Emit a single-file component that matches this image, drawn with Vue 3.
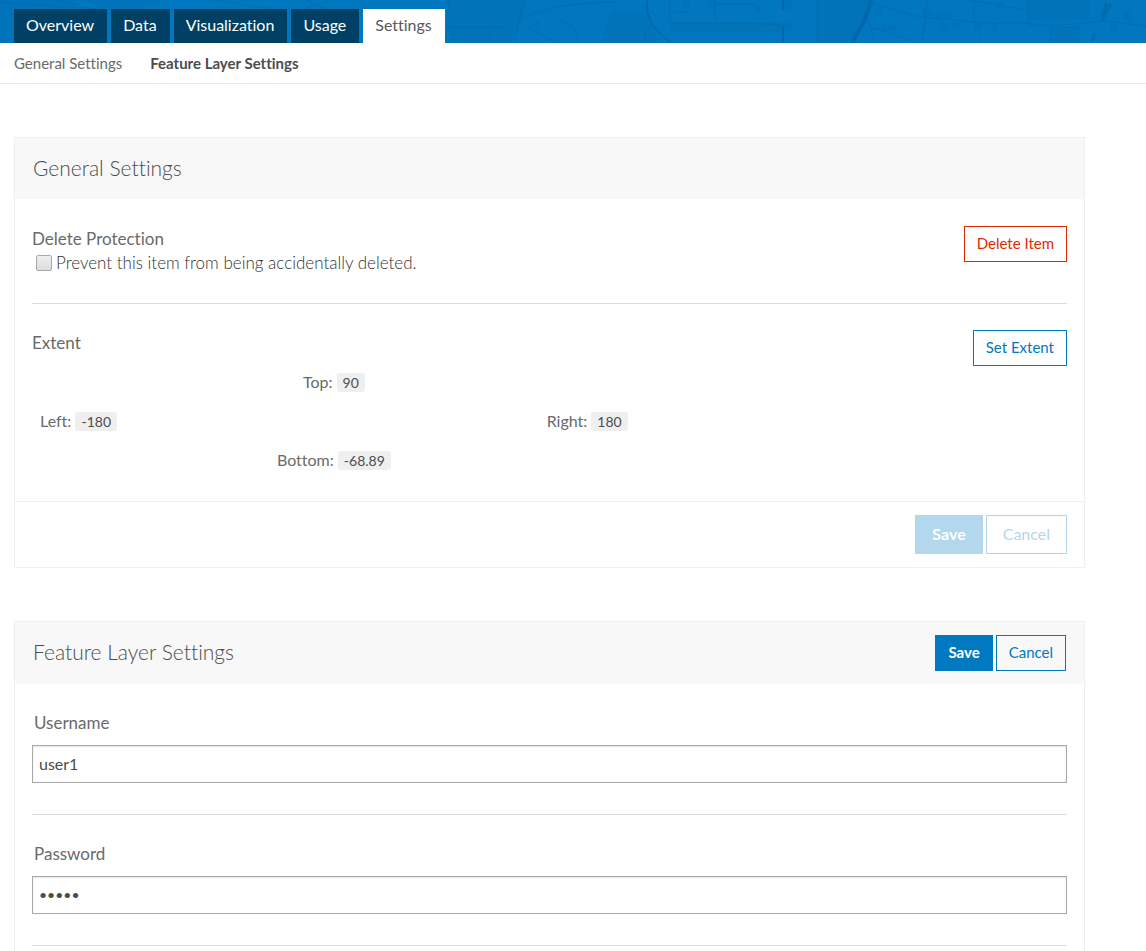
<script setup>
import { ref } from 'vue'

const tabs = ['Overview', 'Data', 'Visualization', 'Usage', 'Settings']
const activeTab = 'Settings'
const extent = [
  { side: 'top', label: 'Top:', value: '90' },
  { side: 'left', label: 'Left:', value: '-180' },
  { side: 'right', label: 'Right:', value: '180' },
  { side: 'bottom', label: 'Bottom:', value: '-68.89' },
]
const protect = ref(false)
const username = ref('user1')
const password = ref('abcde')
</script>

<template>
  <div class="page">
    <header class="banner">
      <svg class="map" viewBox="0 0 1146 43" preserveAspectRatio="xMinYMin slice" aria-hidden="true">
        <g fill="#006fb3" opacity=".4">
          <path d="M0 0H80L40 43H0zM85 0h75l-20 9H100zM448 0h80l-6 20-12 23h-60zM600 43l12-32 36 4 10 28zM670 22h120v10H670zM817 0h53l-4 20-16 23h-33zM1028 0h62v20h-62zM1050 27h30v16h-30z" />
          <circle cx="492" cy="26" r="4" /><circle cx="537" cy="24" r="3" /><circle cx="686" cy="3" r="4" />
          <circle cx="712" cy="3" r="5" /><circle cx="758" cy="9" r="3" /><circle cx="787" cy="4" r="6" />
          <circle cx="787" cy="28" r="5" /><circle cx="879" cy="11" r="3" /><circle cx="885" cy="28" r="4" />
          <circle cx="893" cy="29" r="4" /><circle cx="927" cy="14" r="5" /><circle cx="939" cy="16" r="4" />
          <circle cx="949" cy="15" r="4" /><circle cx="944" cy="27" r="5" /><circle cx="957" cy="26" r="4" />
          <circle cx="978" cy="26" r="4" /><circle cx="995" cy="27" r="4" /><circle cx="1000" cy="6" r="4" />
          <circle cx="1114" cy="28" r="4" /><circle cx="1127" cy="16" r="4" />
        </g>
        <g fill="none" stroke="#0067a8" stroke-width="1" opacity=".55">
          <path d="M0 2l110 8M60 0l50 14M210 0l60 8M305 0l22 9M330 0l-26 9M448 0v30l-6 13M448 27h62M490 28v15M523 0l-8 43M526 16c25-8 38-13 92-14M525 26l32 17M560 20c12 3 18 10 17 23M640 5c12 5 15 10 21 15M670 0v20M675 12h15M715 0v20M715 4h40M670 23h60l60 2M645 43c0-11 1-16 8-18M817 43V0M870 3l50 14 65 6h50M870 27l42 14M868 20l7 23M922 43l3-25 2-18M970 0l55 10M974 0v22M980 43v-9M1028 0v25h35l42-4 41 5M1050 43V27h30" />
        </g>
        <g fill="none" stroke="#0065a5" opacity=".75">
          <path d="M647 0v10c3 15 10 22 24 33" stroke-width="2" />
          <path d="M783 0v10M783 26v17" stroke-width="2" />
          <path d="M871 0c-3 14-6 20-10 27l-9 16" stroke-width="4" />
          <path d="M1107 3l-5 12M1111 4l-10 17M1095 33l-3 8" stroke-width="3" />
        </g>
      </svg>
      <nav class="tabs" aria-label="Item">
        <a v-for="t in tabs" :key="t" href="#" class="tab" :class="{ active: t === activeTab }">{{ t }}</a>
      </nav>
    </header>

    <nav class="subnav" aria-label="Settings">
      <a href="#">General Settings</a>
      <a href="#" class="current">Feature Layer Settings</a>
    </nav>

    <main class="content">
      <section class="panel">
        <div class="panel-head"><h2>General Settings</h2></div>
        <div class="block">
          <div class="row">
            <div>
              <h3>Delete Protection</h3>
              <label class="check"><input v-model="protect" type="checkbox" />Prevent this item from being accidentally deleted.</label>
            </div>
            <button type="button" class="btn danger">Delete Item</button>
          </div>
        </div>
        <div class="block">
          <div class="row">
            <h3>Extent</h3>
            <button type="button" class="btn">Set Extent</button>
          </div>
          <div class="extent">
            <div v-for="e in extent" :key="e.side" :class="e.side">{{ e.label }} <span class="value">{{ e.value }}</span></div>
          </div>
        </div>
        <div class="panel-foot">
          <button type="button" class="btn large primary" disabled>Save</button>
          <button type="button" class="btn large" disabled>Cancel</button>
        </div>
      </section>

      <section class="panel open">
        <div class="panel-head">
          <h2>Feature Layer Settings</h2>
          <div class="actions">
            <button type="button" class="btn primary">Save</button>
            <button type="button" class="btn">Cancel</button>
          </div>
        </div>
        <div class="field">
          <label for="username">Username</label>
          <input id="username" v-model="username" type="text" autocomplete="off" />
        </div>
        <div class="field">
          <label for="password">Password</label>
          <input id="password" v-model="password" type="password" autocomplete="off" />
        </div>
      </section>
    </main>
  </div>
</template>

<style>
body {
  margin: 0;
  background: #fff;
}
</style>

<style scoped>
.page {
  display: flex;
  flex-direction: column;
  min-height: 100vh;
  font-family: Lato, "Liberation Sans", sans-serif;
  font-size: 16px;
  font-variant-ligatures: none;
  line-height: 24px;
  color: #4c4c4c;
}
.page * {
  box-sizing: border-box;
}
.banner {
  position: relative;
  overflow: hidden;
  padding: 9px 14px 0;
  background: #0077be;
}
.map {
  position: absolute;
  top: 0;
  left: 0;
  width: 100%;
  height: 100%;
}
.tabs {
  position: relative;
  display: flex;
  gap: 4px;
}
.tab {
  padding: 4px 13px 6px 12px;
  background: #004064;
  color: #fff;
  text-decoration: none;
}
.tab.active {
  background: #fff;
  color: #595959;
}
.subnav {
  display: flex;
  gap: 28px;
  padding: 8px 14px;
  border-bottom: 1px solid #eaeaea;
  font-size: 15px;
}
.subnav a {
  color: #6a6a6a;
  text-decoration: none;
}
.subnav .current {
  color: #4c4c4c;
  font-weight: 700;
}
.content {
  flex: 1;
  display: flex;
  flex-direction: column;
  gap: 53px;
  padding: 53px 61px 0 14px;
}
.panel {
  border: 1px solid #efefef;
}
.panel.open {
  flex: 1;
  border-bottom: 0;
}
.panel-head {
  display: flex;
  align-items: center;
  justify-content: space-between;
  min-height: 61px;
  padding: 13px 18px;
  background: #f8f8f8;
}
h2,
h3 {
  margin: 0;
  font-weight: 400;
  color: #6a6a6a;
}
h2 {
  padding-bottom: 2px;
  font-size: 21px;
  font-weight: 300;
  color: #4c4c4c;
}
h3 {
  padding-top: 1px;
  font-size: 17px;
}
.block {
  margin: 0 17px;
  padding: 27px 0 28px;
}
.block + .block {
  padding: 26px 0 29px;
  border-top: 1px solid #dcdcdc;
}
.row {
  display: flex;
  align-items: flex-start;
  justify-content: space-between;
}
.check {
  display: flex;
  align-items: center;
  color: #333;
  font-size: 17px;
  font-weight: 300;
}
.check input {
  appearance: none;
  width: 16px;
  height: 16px;
  margin: 0 4px;
  border: 1px solid #a9a9a9;
  border-radius: 2px;
  background: linear-gradient(#eee, #dcdcdc);
}
.check input:checked {
  background: #0079c1;
}
.btn {
  padding: 4px 12px 6px;
  border: 1px solid #0079c1;
  background: transparent;
  color: #0079c1;
  font: inherit;
  font-size: 15px;
  line-height: 24px;
}
.danger {
  border-color: #de2900;
  color: #de2900;
}
.primary {
  background: #0079c1;
  color: #fff;
  font-weight: 700;
}
.large {
  padding: 6px 16px 7px;
  font-size: 16px;
}
.btn:disabled {
  opacity: 0.3;
}
.primary:disabled {
  border-color: #b3d7ec;
  background: #b3d7ec;
  opacity: 1;
}
.extent {
  display: grid;
  grid-template-columns: 1fr 1fr;
  row-gap: 15px;
  width: 58.333%;
  margin-top: 4px;
  padding: 0 8px;
  color: #6a6a6a;
}
.top,
.bottom {
  grid-column: 1 / -1;
  text-align: center;
}
.right {
  text-align: right;
}
.value {
  display: inline-block;
  padding: 0 6px;
  border-radius: 3px;
  background: #efefef;
  color: #4c4c4c;
  font-size: 14px;
  line-height: 19px;
}
.panel-foot {
  display: flex;
  justify-content: flex-end;
  gap: 3px;
  padding: 13px 17px;
  border-top: 1px solid #efefef;
}
.actions {
  display: flex;
  gap: 3px;
}
.field {
  display: flex;
  flex-direction: column;
  gap: 10px;
  margin: 0 17px;
  padding: 27px 0 31px;
  border-bottom: 1px solid #dcdcdc;
}
.field label {
  padding-left: 2px;
  color: #6a6a6a;
  font-size: 17px;
}
.field input {
  width: 100%;
  height: 38px;
  padding: 0 6px 2px;
  border: 1px solid #a9a9a9;
  border-radius: 0;
  background: #fff;
  box-shadow: inset 0 1px 2px #e4e4e4;
  color: #4c4c4c;
  font: inherit;
  outline: 0;
}
.field input[type="password"] {
  font-size: 14px;
}
</style>
